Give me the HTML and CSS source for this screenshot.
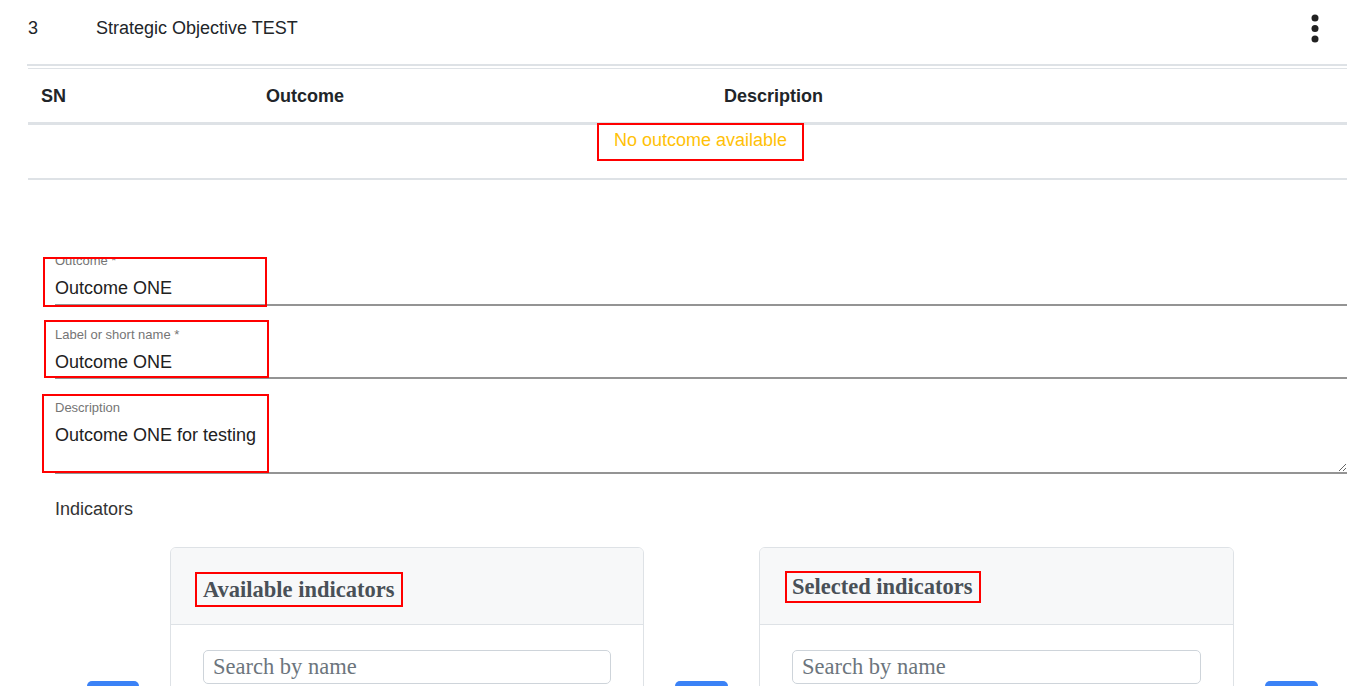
FILE: index.html
```html
<!DOCTYPE html>
<html lang="en">
<head>
<meta charset="utf-8">
<title>Strategic Objective TEST</title>
<link rel="stylesheet" href="styles.css">
</head>
<body>
<div class="page">
  <div class="objective-row">
    <span class="obj-sn">3</span>
    <span class="obj-name">Strategic Objective TEST</span>
    <button class="kebab" type="button" aria-label="More actions">
      <svg width="8" height="30" viewBox="0 0 8 30"><circle cx="4" cy="4" r="3.5"/><circle cx="4" cy="14.5" r="3.5"/><circle cx="4" cy="25" r="3.5"/></svg>
    </button>
  </div>

  <div class="outcomes-table">
    <div class="thead">
      <div class="th">SN</div>
      <div class="th">Outcome</div>
      <div class="th">Description</div>
    </div>
    <div class="tbody-row">
      <span class="empty-msg">No outcome available</span>
    </div>
  </div>

  <form class="outcome-form">
    <div class="field field-outcome">
      <div class="label-clip"><div class="field-label">Outcome *</div></div>
      <div class="field-input">Outcome ONE</div>
    </div>
    <div class="field field-short">
      <div class="field-label">Label or short name *</div>
      <div class="field-input">Outcome ONE</div>
    </div>
    <div class="field field-desc">
      <div class="field-label">Description</div>
      <textarea class="field-textarea">Outcome ONE for testing</textarea>
    </div>
  </form>

  <div class="indicators-label">Indicators</div>

  <div class="transfer">
    <button class="move-btn" type="button" aria-label="Move"></button>
    <div class="card">
      <div class="card-header"><h4 class="card-title">Available indicators</h4></div>
      <div class="card-body"><input class="search" type="text" placeholder="Search by name"></div>
    </div>
    <button class="move-btn move-btn-wide" type="button" aria-label="Move"></button>
    <div class="card card-wide">
      <div class="card-header"><h4 class="card-title card-title-tight">Selected indicators</h4></div>
      <div class="card-body"><input class="search search-wide" type="text" placeholder="Search by name"></div>
    </div>
    <button class="move-btn move-btn-wide" type="button" aria-label="Move"></button>
  </div>
</div>
</body>
</html>
```

FILE: styles.css
```css
* { box-sizing: border-box; }

html, body {
  margin: 0;
  padding: 0;
  background: #ffffff;
}

body {
  font-family: "Liberation Sans", Arial, sans-serif;
  color: #212529;
}

.page {
  height: 686px;
  overflow: hidden;
  padding-left: 27px;
}

/* Objective row */
.objective-row {
  display: flex;
  align-items: flex-start;
  height: 66px;
  padding-top: 17px;
  border-bottom: 2px solid #dee2e6;
  font-size: 18px;
  line-height: 22px;
}

.obj-sn {
  width: 69px;
  padding-left: 1px;
}

.obj-name {
  flex: 1;
}

.kebab {
  width: 40px;
  height: 30px;
  margin: -3px 12px 0 0;
  padding: 0;
  border: 0;
  background: transparent;
  display: flex;
  justify-content: center;
}

.kebab svg { fill: #212121; }

/* Outcomes table */
.outcomes-table {
  margin-top: 2px;
  margin-left: 1px;
  border-top: 1px solid #dee2e6;
}

.thead {
  display: grid;
  grid-template-columns: 226px 458px 1fr;
  height: 56px;
  border-bottom: 3px solid #dee2e6;
  align-items: center;
}

.th {
  padding: 0 12px 0 13px;
  font-weight: bold;
  font-size: 18px;
  line-height: 22px;
}

.th + .th {
  padding-left: 12px;
}

.tbody-row {
  height: 55px;
  border-bottom: 2px solid #dee2e6;
  padding-left: 571px;
}

.empty-msg {
  display: inline-block;
  outline: 2px solid #ff0000;
  padding: 5px 15px 8px;
  font-size: 18px;
  line-height: 21px;
  color: #ffc107;
}

/* Form */
.outcome-form {
  margin-top: 79px;
}

.field {
  outline: 2px solid #ff0000;
  color: #212121;
}

.field-label {
  font-size: 13px;
  line-height: 15px;
  color: #757575;
}

.field-input {
  width: calc(100vw - 55px);
  font-size: 18px;
  line-height: 22px;
  border-bottom: 2px solid #949494;
}

.field-outcome {
  margin-left: 18px;
  width: 220px;
  height: 46px;
  padding-left: 10px;
}

.label-clip {
  height: 7px;
  overflow: hidden;
}

.label-clip .field-label {
  margin-top: -6px;
}

.field-outcome .field-input {
  margin-top: 11px;
  padding-bottom: 5px;
}

.field-short {
  margin-top: 17px;
  margin-left: 19px;
  width: 221px;
  height: 54px;
  padding: 5px 0 0 9px;
}

.field-short .field-input {
  margin-top: 9px;
  padding-bottom: 4px;
}

.field-desc {
  margin-top: 20px;
  margin-left: 17px;
  width: 223px;
  height: 75px;
  padding: 4px 0 0 11px;
}

.field-textarea {
  display: block;
  width: calc(100vw - 55px);
  height: 50px;
  margin: 9px 0 0;
  padding: 0;
  border: 0;
  border-bottom: 2px solid #949494;
  outline: none;
  resize: vertical;
  background: transparent;
  font-family: "Liberation Sans", Arial, sans-serif;
  font-size: 18px;
  line-height: 22px;
  color: #212121;
}

.indicators-label {
  margin-top: 27px;
  margin-left: 28px;
  font-size: 18px;
  line-height: 22px;
  color: #333333;
}

/* Transfer list */
.transfer {
  display: flex;
  align-items: flex-start;
  gap: 31px;
  margin-top: 27px;
  margin-left: 60px;
}

.move-btn {
  flex: none;
  width: 52px;
  height: 40px;
  margin-top: 134px;
  padding: 0;
  border: 0;
  border-radius: 5px;
  background: #3b82f6;
}

.move-btn-wide { width: 53px; }

.card {
  flex: none;
  width: 474px;
  height: 220px;
  border: 1px solid #dee2e6;
  border-radius: 6px;
  overflow: hidden;
}

.card-wide { width: 475px; }

.card-header {
  height: 77px;
  padding: 26px 0 0 26px;
  background: #f7f8f9;
  border-bottom: 1px solid #dee2e6;
}

.card-title {
  display: inline-block;
  margin: 0;
  padding: 2px 7px 2px 6px;
  outline: 2px solid #ff0000;
  font-family: "Liberation Serif", "Times New Roman", serif;
  font-weight: bold;
  font-size: 22.5px;
  line-height: 27px;
  color: #495057;
}

.card-title-tight {
  margin-top: -1px;
  margin-left: 1px;
  padding: 0 6px 1px 5px;
}

.card-body {
  padding: 25px 0 0 32px;
}

.search {
  display: block;
  width: 408px;
  height: 34px;
  padding: 0 9px;
  border: 1px solid #ced4da;
  border-radius: 5px;
  font-family: "Liberation Serif", "Times New Roman", serif;
  font-size: 22.5px;
  color: #495057;
  background: #ffffff;
}

.search-wide { width: 409px; }

.search::placeholder {
  color: #6c757d;
}
```
